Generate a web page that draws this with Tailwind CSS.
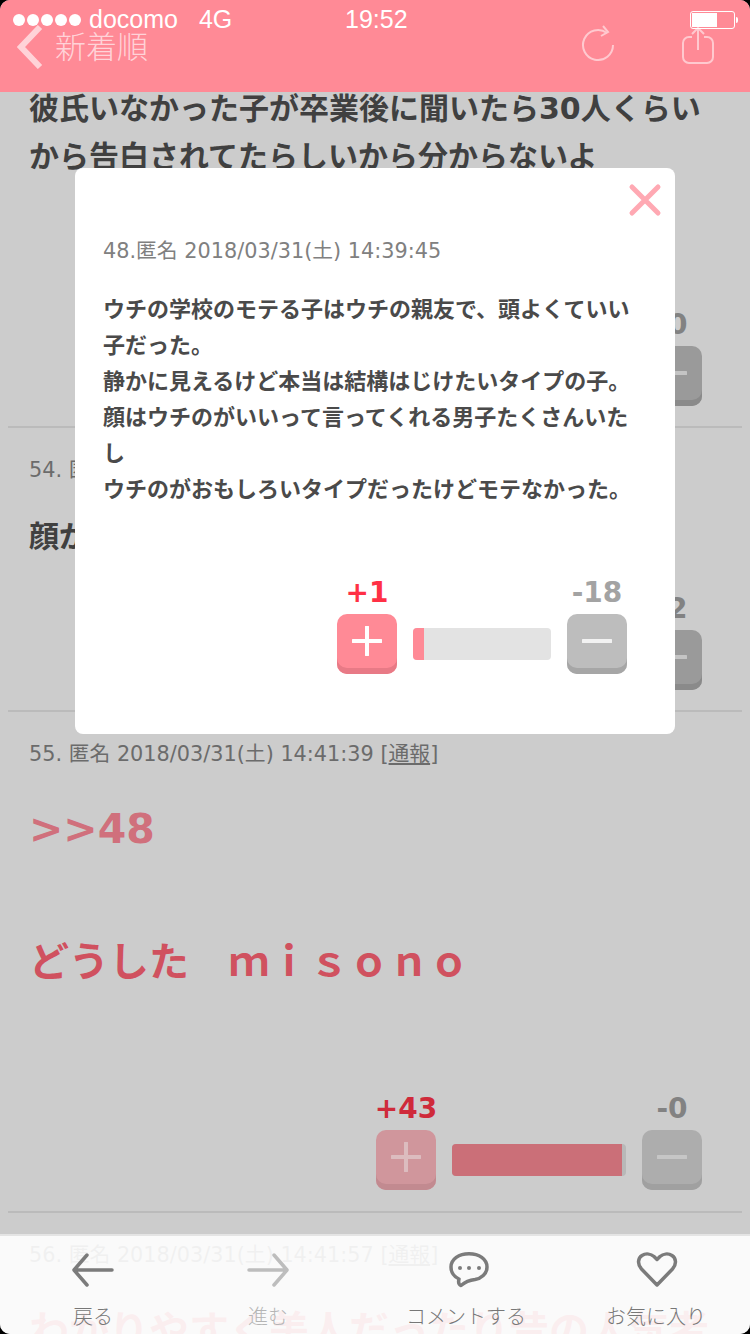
<!DOCTYPE html>
<html lang="ja">
  <head>
    <meta charset="UTF-8" />
    <meta name="viewport" content="width=device-width, initial-scale=1.0" />
    <script src="https://cdn.jsdelivr.net/npm/@tailwindcss/browser@4"></script>
  </head>
  <body class="bg-black">
    <div class="relative w-[750px] h-[1334px] overflow-hidden rounded-[10px] bg-[#cccccc] font-['Noto_Sans_CJK_JP',sans-serif]">
      <!-- feed -->
      <div class="flex flex-col pt-[82px]">
        <section class="mx-2 px-[21px] border-b-2 border-[#bbbbbb] pb-5">
          <p class="text-[30px] leading-[48px] font-bold text-[#404040]">彼氏いなかった子が卒業後に聞いたら<span class="font-['DejaVu_Sans'] leading-none">30</span>人くらいから告白されてたらしいから分からないよ<br /><br /><br /></p>
          <div class="flex justify-end items-end gap-4 pr-[19px] mt-[34px]">
            <div class="flex flex-col items-center w-[60px]">
              <span class="font-['DejaVu_Sans'] font-bold text-[28px] leading-[32px] mt-px mb-[5px] text-[#cf2a3a]">+5</span>
              <div class="flex items-center justify-center w-[60px] h-[60px] rounded-[10px] bg-[#d0969c] shadow-[inset_0_-6px_0_#c28a90]"></div>
            </div>
            <div class="w-[174px] h-8 mb-[14px] rounded bg-[#bdbdbd] overflow-hidden"><div class="h-full w-full bg-[#cb6f78]"></div></div>
            <div class="flex flex-col items-center w-[60px]">
              <span class="font-['DejaVu_Sans'] font-bold text-[28px] leading-[32px] mt-px mb-[5px] text-[#828282]">-0</span>
              <div class="flex items-center justify-center pb-[6px] w-[60px] h-[60px] rounded-[10px] bg-[#9a9a9a] shadow-[inset_0_-6px_0_#8a8a8a]">
                <svg width="30" height="30" viewBox="0 0 30 30"><path d="M1 15h28" stroke="#c4c4c4" stroke-width="4" stroke-linecap="round" /></svg>
              </div>
            </div>
          </div>
        </section>

        <section class="mx-2 px-[21px] border-b-2 border-[#bbbbbb] pb-5">
          <p class="mt-[27px] text-[20.8px] leading-[30px] text-[#6b6b6b] font-['DejaVu_Sans','Noto_Sans_CJK_JP',sans-serif]">54. 匿名 2018/03/31(土) 14:40:12 [<span class="underline">通報</span>]</p>
          <p class="mt-[25px] text-[30px] leading-[48px] font-bold text-[#404040]">顔がいいからね</p>
          <div class="flex justify-end items-end gap-4 pr-[19px] mt-[34px]">
            <div class="flex flex-col items-center w-[60px]">
              <span class="font-['DejaVu_Sans'] font-bold text-[28px] leading-[32px] mt-px mb-[5px] text-[#cf2a3a]">+3</span>
              <div class="w-[60px] h-[60px] rounded-[10px] bg-[#d0969c] shadow-[inset_0_-6px_0_#c28a90]"></div>
            </div>
            <div class="w-[174px] h-8 mb-[14px] rounded bg-[#bdbdbd] overflow-hidden"><div class="h-full w-1/2 bg-[#cb6f78]"></div></div>
            <div class="flex flex-col items-center w-[60px]">
              <span class="font-['DejaVu_Sans'] font-bold text-[28px] leading-[32px] mt-px mb-[5px] text-[#828282]">-2</span>
              <div class="flex items-center justify-center pb-[6px] w-[60px] h-[60px] rounded-[10px] bg-[#9a9a9a] shadow-[inset_0_-6px_0_#8a8a8a]">
                <svg width="30" height="30" viewBox="0 0 30 30"><path d="M1 15h28" stroke="#c4c4c4" stroke-width="4" stroke-linecap="round" /></svg>
              </div>
            </div>
          </div>
        </section>

        <section class="mx-2 px-[21px] border-b-2 border-[#bbbbbb] pb-[21px]">
          <p class="mt-[27px] text-[20.8px] leading-[30px] text-[#6b6b6b] font-['DejaVu_Sans','Noto_Sans_CJK_JP',sans-serif]">55. 匿名 2018/03/31(土) 14:41:39 [<span class="underline">通報</span>]</p>
          <p class="mt-[27px] h-[66px] font-['DejaVu_Sans'] text-[41px] leading-[66px] font-bold text-[#d0707c]">&gt;&gt;48</p>
          <p class="mt-[64px] h-[66px] text-[40px] leading-[66px] font-bold text-[#d0515f]">どうした　ｍｉｓｏｎｏ</p>
          <div class="flex justify-end items-end gap-4 pr-[19px] mt-[100px]">
            <div class="flex flex-col items-center w-[60px]">
              <span class="font-['DejaVu_Sans'] font-bold text-[28px] leading-[32px] mt-px mb-[5px] text-[#cf2a3a]">+43</span>
              <div class="flex items-center justify-center pb-[6px] w-[60px] h-[60px] rounded-[10px] bg-[#d0969c] shadow-[inset_0_-6px_0_#c28a90]">
                <svg width="30" height="30" viewBox="0 0 30 30"><path d="M1 15h28M15 1v28" stroke="#dcbcbf" stroke-width="4" stroke-linecap="round" /></svg>
              </div>
            </div>
            <div class="w-[174px] h-8 mb-[14px] rounded bg-[#b8b8b8] overflow-hidden"><div class="h-full w-[170px] bg-[#cb6f78]"></div></div>
            <div class="flex flex-col items-center w-[60px]">
              <span class="font-['DejaVu_Sans'] font-bold text-[28px] leading-[32px] mt-px mb-[5px] text-[#828282]">-0</span>
              <div class="flex items-center justify-center pb-[6px] w-[60px] h-[60px] rounded-[10px] bg-[#adadad] shadow-[inset_0_-6px_0_#a0a0a0]">
                <svg width="30" height="30" viewBox="0 0 30 30"><path d="M1 15h28" stroke="#c6c6c6" stroke-width="4" stroke-linecap="round" /></svg>
              </div>
            </div>
          </div>
        </section>

        <section class="mx-2 px-[21px]">
          <p class="mt-[27px] text-[20.8px] leading-[30px] text-[#6b6b6b] font-['DejaVu_Sans','Noto_Sans_CJK_JP',sans-serif]">56. 匿名 2018/03/31(土) 14:41:57 [<span class="underline">通報</span>]</p>
          <p class="mt-[25px] text-[40px] leading-[66px] font-bold text-[#d0515f] whitespace-nowrap">わかりやすく美人だったり昔の人気者</p>
        </section>
      </div>

      <!-- header -->
      <header class="absolute top-0 left-0 w-full h-[92px] bg-[#ff8a96]">
        <div class="flex items-center h-10 pl-[13px] pr-[12px] text-white font-['Liberation_Sans',sans-serif] relative z-10">
          <div class="flex gap-[2px]">
            <span class="w-3 h-3 rounded-full bg-white"></span>
            <span class="w-3 h-3 rounded-full bg-white"></span>
            <span class="w-3 h-3 rounded-full bg-white"></span>
            <span class="w-3 h-3 rounded-full bg-white"></span>
            <span class="w-3 h-3 rounded-full bg-white"></span>
          </div>
          <span class="ml-2 text-[25px]">docomo</span>
          <span class="ml-[21px] text-[25px]">4G</span>
          <span class="absolute left-[345px] text-[25px] font-medium">19:52</span>
          <div class="ml-auto flex items-center">
            <div class="w-[45px] h-[18px] border border-white rounded-[3px] p-[1px]"><div class="h-full w-[25px] bg-white"></div></div>
            <div class="w-[2px] h-[6px] ml-[1px] bg-white rounded-r-sm"></div>
          </div>
        </div>
        <nav class="flex items-center h-10 -mt-[13px] pl-[17px] pr-[34px] text-[#ffd3d8]">
          <svg width="26" height="44" viewBox="0 0 26 44" class="shrink-0"><path d="M23 2 4 22l19 20" fill="none" stroke="currentColor" stroke-width="6" /></svg>
          <span class="ml-3 mb-[6px] text-[31px] leading-none font-light">新着順</span>
          <svg width="36" height="40" viewBox="0 0 36 40" class="ml-auto shrink-0 overflow-visible"><path d="M33 18A15 15 0 1 1 27 6" fill="none" stroke="#ffc9cf" stroke-width="2" /><path d="M23-1l5 6-7 4" fill="none" stroke="#ffc9cf" stroke-width="2" /></svg>
          <svg width="36" height="40" viewBox="0 0 36 40" class="ml-16 shrink-0"><path d="M12 10H9a6 6 0 0 0-6 6v14a6 6 0 0 0 6 6h18a6 6 0 0 0 6-6V16a6 6 0 0 0-6-6h-3" fill="none" stroke="#ffc9cf" stroke-width="2" /><path d="M18 23V1M12 7l6-6 6 6" fill="none" stroke="#ffc9cf" stroke-width="2" /></svg>
        </nav>
      </header>

      <!-- modal -->
      <div class="absolute left-[75px] top-[168px] w-[600px] h-[566px] rounded-lg bg-white pt-[68px] pl-7">
        <svg width="36" height="36" viewBox="0 0 36 36" class="absolute top-[14px] right-[12px]"><path d="M5 5l26 26M31 5 5 31" stroke="#ffa9b3" stroke-width="5" stroke-linecap="round" /></svg>
        <p class="text-[20.8px] leading-[30px] text-[#808080] font-['DejaVu_Sans','Noto_Sans_CJK_JP',sans-serif]">48.匿名 2018/03/31(土) 14:39:45</p>
        <p class="mt-[23px] w-[540px] text-[22px] leading-[36px] font-bold text-[#4a4a4a]">ウチの学校のモテる子はウチの親友で、頭よくていい子だった。<br />静かに見えるけど本当は結構はじけたいタイプの子。<br />顔はウチのがいいって言ってくれる男子たくさんいたし<br />ウチのがおもしろいタイプだったけどモテなかった。</p>
        <div class="flex justify-end items-end gap-4 pr-[48px] mt-[71px]">
          <div class="flex flex-col items-center w-[60px]">
            <span class="font-['DejaVu_Sans'] font-bold text-[28px] leading-[32px] mt-px mb-[5px] text-[#ff3045]">+1</span>
            <div class="flex items-center justify-center pb-[6px] w-[60px] h-[60px] rounded-[10px] bg-[#ff8a96] shadow-[inset_0_-6px_0_#e87a86]">
              <svg width="30" height="30" viewBox="0 0 30 30"><path d="M1 15h28M15 1v28" stroke="#ffffff" stroke-width="4" stroke-linecap="round" /></svg>
            </div>
          </div>
          <div class="w-[138px] h-8 mb-[14px] rounded bg-[#e3e3e3] overflow-hidden"><div class="h-full w-[11px] bg-[#ff8a96]"></div></div>
          <div class="flex flex-col items-center w-[60px]">
            <span class="font-['DejaVu_Sans'] font-bold text-[28px] leading-[32px] mt-px mb-[5px] text-[#a3a3a3]">-18</span>
            <div class="flex items-center justify-center pb-[6px] w-[60px] h-[60px] rounded-[10px] bg-[#bdbdbd] shadow-[inset_0_-6px_0_#a6a6a6]">
              <svg width="30" height="30" viewBox="0 0 30 30"><path d="M1 15h28" stroke="#f2f2f2" stroke-width="4" stroke-linecap="round" /></svg>
            </div>
          </div>
        </div>
      </div>

      <!-- bottom toolbar -->
      <footer class="absolute bottom-0 left-0 w-full h-[100px] flex bg-white/90 border-t-2 border-[#e4e4e4] text-[#777777] text-[20px] font-light">
        <div class="flex flex-col items-center w-[186px] pt-4">
          <svg width="42" height="36" viewBox="0 0 42 36" class="h-9"><path d="M40 18H3M15 3 2 18l13 15" fill="none" stroke="#7b7b7b" stroke-width="3.5" stroke-linecap="round" stroke-linejoin="round" /></svg>
          <span class="mt-[14px] leading-7">戻る</span>
        </div>
        <div class="flex flex-col items-center w-[164px] pt-4 text-[#b5b5b5]">
          <svg width="42" height="36" viewBox="0 0 42 36" class="h-9"><path d="M2 18h37M27 3l13 15-13 15" fill="none" stroke="#bdbdbd" stroke-width="3.5" stroke-linecap="round" stroke-linejoin="round" /></svg>
          <span class="mt-[14px] leading-7">進む</span>
        </div>
        <div class="flex flex-col items-center w-[232px] pt-4">
          <svg width="42" height="36" viewBox="0 0 42 36" class="h-9 ml-[6px]"><path d="M21 1.750C31 1.750 39 7 39 15C39 22 33 26.500 27 27.500C22 28 17 30 13 33.500C11.500 33 10 31 11 27C6 25 3 20 3 15C3 7 11 1.750 21 1.750Z" fill="none" stroke="#7b7b7b" stroke-width="3.5" stroke-linejoin="round" /><circle cx="12" cy="16" r="2" fill="#7b7b7b" /><circle cx="21" cy="16" r="2" fill="#7b7b7b" /><circle cx="31" cy="16" r="2" fill="#7b7b7b" /></svg>
          <span class="mt-[14px] leading-7">コメントする</span>
        </div>
        <div class="flex flex-col items-center w-[148px] pt-4 whitespace-nowrap">
          <svg width="42" height="36" viewBox="0 0 42 36" class="h-9 ml-[2px]"><path d="M21 33 5.500 17C1 12 2 6 6 3.500C10 1 15 2 18 4.500L21 7.500L24 4.500C27 2 32 1 36 3.500C40 6 41 12 36.500 17Z" fill="none" stroke="#7b7b7b" stroke-width="3.5" stroke-linejoin="round" /></svg>
          <span class="mt-[14px] leading-7">お気に入り</span>
        </div>
      </footer>
    </div>
  </body>
</html>
